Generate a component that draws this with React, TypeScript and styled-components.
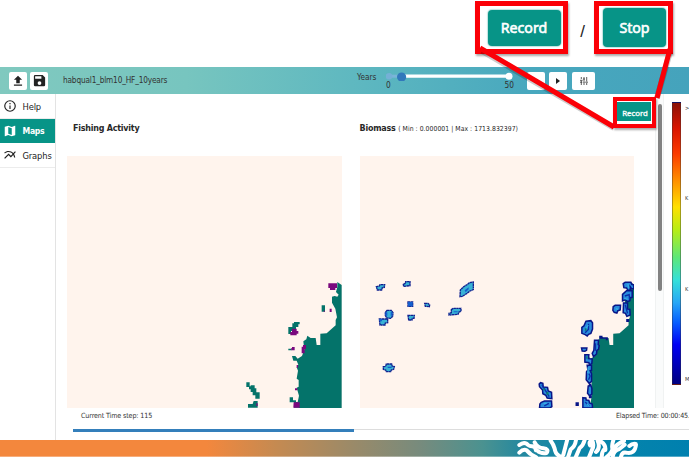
import React from "react";
import styled, { createGlobalStyle, css } from "styled-components";

const GlobalStyle = createGlobalStyle`
  * { box-sizing: border-box; }
  body {
    margin: 0;
    background: #fff;
    overflow: hidden;
    color: #333;
    font-family: "DejaVu Sans Condensed", "DejaVu Sans", "Noto Sans", sans-serif;
    font-stretch: condensed;
  }
`;

const Page = styled.main`
  position: relative;
  display: flex;
  flex-direction: column;
  width: 689px;
  height: 460px;
  overflow: hidden;
  background: #fff;
`;

const Callouts = styled.header`
  display: flex;
  align-items: flex-start;
  height: 67px;
  padding: 1px 0 0 475px;
`;

const CalloutBox = styled.div<{ $width: number }>`
  display: flex;
  width: ${(p) => p.$width}px;
  height: 53px;
  align-items: center;
  justify-content: center;
  border: 5px solid #fb0007;
  box-shadow: 1px 2px 2px #0005;
`;

const BigButton = styled.button<{ $width: number; $height: number; $offset: number }>`
  width: ${(p) => p.$width}px;
  height: ${(p) => p.$height}px;
  margin: 0 0 0 ${(p) => p.$offset}px;
  padding: 0 0 1px;
  border: 0;
  border-radius: 4px;
  background: #079487;
  box-shadow: 0 0 1px 1px #07948744;
  color: #fff;
  font: 14.2px "Noto Sans", sans-serif;
  -webkit-text-stroke: 0.6px #fff;
`;

const Slash = styled.span`
  width: 26px;
  padding: 21px 0 0 3px;
  text-align: center;
  color: #222;
  font: 17px "Liberation Sans", sans-serif;
`;

const AppBar = styled.nav`
  display: flex;
  align-items: center;
  height: 27px;
  padding-left: 9px;
  background: linear-gradient(90deg, #80c9bf 0%, #77c5bf 27%, #5db7c0 53%, #48a8be 77%, #45a3bc 100%);
`;

const ToolButton = styled.button<{ $width?: number; $gap?: number }>`
  display: flex;
  align-items: center;
  justify-content: center;
  flex: none;
  width: ${(p) => p.$width ?? 18}px;
  height: 18px;
  margin: 0 ${(p) => p.$gap ?? 3}px 0 0;
  padding: 0;
  border: 0;
  border-radius: 2px;
  background: #fff;
`;

const ProjectName = styled.div`
  flex: none;
  width: 306px;
  padding: 0 0 2px 12px;
  font-size: 8.2px;
  letter-spacing: -0.16px;
  white-space: nowrap;
`;

const YearsLabel = styled.label`
  flex: none;
  width: 29px;
  height: 19px;
  font-size: 8.2px;
  line-height: 12px;
`;

const YearSlider = styled.div`
  flex: none;
  width: 132px;
  height: 25px;
  margin-right: 9px;
`;

const Ends = styled.div`
  display: flex;
  justify-content: space-between;
  width: 128px;
  height: 10px;
  margin-top: -1px;
  font-size: 8.3px;
  line-height: 10px;
`;

const SliderArt = styled.svg`
  display: block;
  width: 130px;
  height: 13px;
`;

const Body = styled.div`
  display: flex;
  height: 346px;
`;

const Sidebar = styled.aside`
  flex: none;
  width: 56px;
  border-right: 1px solid #e3e3e3;
`;

const NavItem = styled.a<{ $active?: boolean }>`
  display: flex;
  align-items: center;
  height: 24.6px;
  padding: 1px 0 0 3px;
  gap: 5.5px;
  border-bottom: 1px solid #ececec;
  font-size: 9.3px;
  letter-spacing: -0.15px;
  color: #222;
  ${(p) =>
    p.$active &&
    css`
      background: #079487;
      border-color: #079487;
      color: #fff;
      font-weight: bold;
      font-size: 8.6px;
      letter-spacing: -0.3px;
    `}
`;

const NavIcon = styled.svg`
  flex: none;
  width: 14px;
  height: 14px;
`;

const Workspace = styled.section`
  width: 616px;
  flex: none;
  padding: 0 0 0 11px;
`;

const MapArea = styled.div`
  display: flex;
  gap: 18px;
  height: 314px;
`;

const MapPanel = styled.article`
  width: 274.6px;
  flex: none;
`;

const MapTitle = styled.h2<{ $indent: number }>`
  height: 62px;
  margin: 0;
  padding: 28px 0 0 ${(p) => p.$indent}px;
  font-size: 8.9px;
  letter-spacing: -0.22px;
  line-height: 13px;
  white-space: nowrap;
  color: #282828;
`;

const Range = styled.span`
  font-size: 6.8px;
  font-weight: normal;
  letter-spacing: 0.05px;
`;

const MapCanvas = styled.svg`
  display: block;
  width: 274.6px;
  height: 252px;
  background: #fff4ed;
`;

const ScrollTrack = styled.div`
  flex: none;
  width: 9px;
  height: 314px;
  margin-left: 3px;
  padding: 10px 1px 0 1.5px;
  border: 1px solid #f0f2f2;
  border-width: 0 1px;
  background: #fafbfb;
`;

const ScrollThumb = styled.div`
  width: 4.5px;
  height: 187px;
  border-radius: 2px;
  background: #828282;
`;

const Status = styled.div`
  display: flex;
  justify-content: space-between;
  width: 622px;
  height: 21px;
  padding: 2px 0 0 14px;
  font-size: 7.1px;
  letter-spacing: -0.12px;
  line-height: 11px;
  white-space: nowrap;
`;

const Elapsed = styled.span`
  width: 73px;
  flex: none;
  letter-spacing: -0.16px;
`;

const Progress = styled.div`
  width: 616px;
  height: 3px;
  margin-left: 6px;
  border-top: 1px solid #ddd;
`;

const ProgressFill = styled.div`
  width: 281px;
  height: 3px;
  margin-top: -1px;
  background: #347fbb;
`;

const Legend = styled.div`
  display: flex;
  flex: none;
  width: 17px;
  padding-top: 8px;
  gap: 4px;
`;

const ColorBar = styled.div`
  flex: none;
  width: 9px;
  height: 283px;
  border: 1px solid #3336;
  background: linear-gradient(#8b1208 0%, #d91500 9%, #fb3b00 18%, #ff9300 28%, #ffe000 37%, #b8ed14 45%, #5de779 55%, #35e0d9 63%, #27a7f6 71%, #075fff 78%, #0000f4 86%, #000080 100%);
`;

const LegendLabels = styled.div`
  display: flex;
  flex-direction: column;
  justify-content: space-between;
  height: 282px;
  padding: 1px 0 0;
  font-size: 5.6px;
  line-height: 10px;
`;

const Footer = styled.footer`
  height: 17px;
  background: linear-gradient(90deg, #f3873d 0 30%, #c58a51 40%, #9b8a68 51%, #778b7d 61%, #4b9290 70%, #2388a0 76%, #0785aa 86%, #0080af 100%);
`;

const Coral = styled.svg`
  display: block;
  width: 689px;
  height: 17px;
`;

const CalloutOverlay = styled.svg`
  position: absolute;
  inset: 0;
  pointer-events: none;
`;

const RecordBadge = styled.div`
  position: absolute;
  left: 613px;
  top: 97px;
  width: 43px;
  height: 31px;
  padding: 1px 1px 2px 0;
  border: 4px solid #fb0007;
  background: #fff;
  box-shadow: 1px 2px 2px #0005;
`;

const RecordButton = styled.button`
  display: block;
  width: 34px;
  height: 19px;
  padding: 2px 0 0 2px;
  border: 0;
  background: #079487;
  color: #fff;
  font: 7.8px "Noto Sans", sans-serif;
  -webkit-text-stroke: 0.3px #fff;
`;

const LAND =
  "322,36 335,45 335,414 207,414 203,397 207,377 200,353 206,350 206,330 200,326 204,302 200,292 205,284 200,272 190,272 186,258 196,258 203,266 216,258 223,239 220,214 229,208 232,197 242,204 257,204 260,225 271,225 271,191 290,190 317,166 317,150 321,142 316,116 306,98 306,80 314,78 322,80 326,74 318,66 322,51";

function ActivityMap() {
  return (
    <MapCanvas viewBox="0 0 274.6 252">
      <g transform="translate(163 114) scale(.33333)" fill="#04736a">
        <polygon points={LAND} />
        <path d="M275 106h10v19h-10zM192 156h17v7h-4v8h-7v12h-15v9h-8v-21h12v-11h5zM175 236h10v5h-10zM49 337h10v14H49zM62 346h12v9h5v12h10v19H76v-10h-8v-10h-6v-8h-5v-9h5zM71 393h12v20H54v-11h14zM179 382h10v9h9v5h9v17h-15v-16h-13z" />
        <path fill="#7a087e" d="M295 40h26v14h-5v6h-16v-6h-5zM299 116h6v10h-6zM186 176h14v7h5v8h-5v5h-19v-10h5zM186 231h8v10h-10v-7h2zM219 225h9v12h-4v13h-9v-20h4zM191 397h18v16h-19zM200 285h4v8h-4zM195 355h7v6h-7zM79 400h4v8h-4zM281 122h4v3h-4z" />
      </g>
    </MapCanvas>
  );
}

const ISLANDS = [
  "49,50 58,48 60,44 74,44 73,52 67,53 65,60 52,60",
  "130,43 136,40 137,35 150,35 150,47 131,49",
  "144,96 158,96 158,109 144,109",
  "194,100 204,100 209,105 208,110 196,109",
  "144,136 163,136 162,145 157,145 156,150 146,150",
  "81,121 94,121 99,128 98,139 92,145 80,144 76,136 76,127",
  "58,147 83,147 83,158 76,159 75,165 60,165",
  "274,119 280,115 303,115 303,124 297,126 294,133 267,135 267,130 274,128",
  "300,80 301,60 311,50 323,43 328,38 340,36 340,59 330,63 321,70 307,79",
  "70,290 77,289 79,282 95,282 97,289 103,290 101,298 94,300 92,305 79,305 77,300 70,298",
];

const COAST = [
  "279,41 285,37 302,37 305,43 311,45 311,56 304,56 300,50 300,61 293,61 289,54 281,53",
  "277,73 289,62 306,62 306,82 300,83 299,92 291,95 287,89 277,93",
  "249,110 255,106 271,106 270,120 263,122 260,129 252,127 248,121",
  "280,99 292,99 292,117 299,118 300,135 290,139 286,130 279,128",
  "167,154 182,152 187,158 187,177 182,190 175,193 171,198 165,194 155,190 155,172 161,168",
  "154,234 170,234 169,241 164,244 156,243",
  "193,211 205,211 204,224 207,226 205,238 200,241 199,252 190,260 186,250 191,241",
  "164,254 176,254 175,266 186,267 185,280 178,285 176,278 164,276",
  "171,286 184,286 184,301 180,302 184,311 184,334 177,340 168,329 169,305 173,300",
  "174,348 182,346 185,355 185,372 178,377 172,370",
  "158,383 167,384 168,390 176,391 178,399 186,402 187,414 158,414",
  "27,342 31,338 38,340 39,351 52,352 54,363 64,367 65,386 51,384 47,376 38,371 37,360 28,350",
  "33,397 43,393 64,393 65,410 59,414 28,414 29,402",
];

function BiomassMap() {
  return (
    <MapCanvas viewBox="0 0 274.6 252">
      <polygon points={LAND} fill="#04736a" transform="translate(162.9 114) scale(.33333)" />
      <g transform="translate(0 114) scale(.33333)" fill="#39b2d5" stroke="#10218f" strokeWidth="4" strokeDasharray="7 1">
        {ISLANDS.map((points) => (
          <polygon key={points} points={points} />
        ))}
        <g fill="#145fce" stroke="none">
          <path d="M144 96h14v13h-14zM76 127h6v10h-6zM92 126h5v11h-5zM281 124h12v3h-12zM314 61l12-9v6l-9 9zM83 290h12v4H83zM58 147h8v7h-8z" />
        </g>
      </g>
      <g transform="translate(170.2 114) scale(.33333)" fill="#298bdc" stroke="#081587" strokeWidth="4.5">
        {COAST.map((points) => (
          <polygon key={points} points={points} />
        ))}
        <path fill="#081587" stroke="none" d="M288 147h9v9h-9zM207 197h10v5h16v9h-6v-5h-20zM136 397h10v11h-10zM176 341h7v8h-7zM176 376h9v9h-9z" />
        <g fill="none" stroke="#0b2da8" strokeWidth="4">
          <path d="M284 78l13-4 1 15M175 161v17l-10 10M176 311l4 7-5 11M165 396l12 12M35 344l11 18 11 18M42 408l14-8M285 104l7 26M196 220v22" />
        </g>
        <path fill="none" stroke="#36afe5" strokeWidth="4" d="M293 42l3 13M282 85l10 3M165 180l9-15M174 292l-1 18M171 401l5 8M40 400h9M257 116l7 2" />
        <path fill="#09806f" stroke="none" d="M164 175h5v7h-5zM39 355h5v6h-5zM49 366h6v8h-6zM168 259h4v7h-4z" />
      </g>
    </MapCanvas>
  );
}

export default function App() {
  return (
    <>
      <GlobalStyle />
      <Page>
        <Callouts>
          <CalloutBox $width={93}>
            <BigButton $width={73} $height={36} $offset={5}>Record</BigButton>
          </CalloutBox>
          <Slash>/</Slash>
          <CalloutBox $width={79}>
            <BigButton $width={63} $height={39} $offset={2}>Stop</BigButton>
          </CalloutBox>
        </Callouts>
        <AppBar>
          <ToolButton>
            <svg width="14" height="14" viewBox="0 0 24 24" fill="#222"><path d="M5 20h14v-2H5v2zm0-10h4v6h6v-6h4l-7-7-7 7z" /></svg>
          </ToolButton>
          <ToolButton>
            <svg width="15" height="15" viewBox="0 0 24 24" fill="#222"><path d="M17 3H5a2 2 0 0 0-2 2v14a2 2 0 0 0 2 2h14a2 2 0 0 0 2-2V7l-4-4zm-5 16a3 3 0 1 1 0-6 3 3 0 0 1 0 6zm3-10H5V5h10v4z" /></svg>
          </ToolButton>
          <ProjectName>habqual1_blm10_HF_10years</ProjectName>
          <YearsLabel>Years</YearsLabel>
          <YearSlider>
            <SliderArt viewBox="0 0 130 13">
              <path d="M3 8.2h13" stroke="#79b5d8" strokeWidth="3" />
              <path d="M16 8.2h107" stroke="#fff" strokeWidth="3.2" />
              <circle cx="3" cy="8.2" r="3.3" fill="#75b0d6" />
              <circle cx="123" cy="8.2" r="3.5" fill="#fff" />
              <circle cx="15.6" cy="9" r="4.6" fill="#3178bb" />
            </SliderArt>
            <Ends><span>0</span><span>50</span></Ends>
          </YearSlider>
          <ToolButton $gap={4}>
            <svg width="8" height="8"><path d="M2 2h4v4H2z" fill="#222" /></svg>
          </ToolButton>
          <ToolButton $gap={5}>
            <svg width="6" height="6"><path d="M1 0l4 3-4 3z" fill="#222" /></svg>
          </ToolButton>
          <ToolButton $width={23}>
            <svg width="8" height="8" viewBox="0 0 8 8" stroke="#333" strokeWidth=".8"><path d="M1.3 0v2M1.3 3.5V8M4 0v4.5M4 6v2M6.7 0v4.5M6.7 6v2M0 3.3h2.6M2.7 5.2h2.6M5.4 5.2H8M3 2h2M0 5.2h2" /></svg>
          </ToolButton>
        </AppBar>
        <Body>
          <Sidebar>
            <NavItem>
              <NavIcon viewBox="0 0 24 24" fill="none" stroke="#222" strokeWidth="2"><circle cx="12" cy="12" r="9" /><path d="M12 11v6M12 7v2" /></NavIcon>
              Help
            </NavItem>
            <NavItem $active>
              <NavIcon viewBox="0 0 24 24" fill="#fff"><path d="M20.5 3l-.16.03L15 5.1 9 3 3.36 4.9c-.21.07-.36.25-.36.48V20.5c0 .28.22.5.5.5l.16-.03L9 18.9l6 2.1 5.64-1.9c.21-.07.36-.25.36-.48V3.5c0-.28-.22-.5-.5-.5zM15 19l-6-2.11V5l6 2.11V19z" /></NavIcon>
              Maps
            </NavItem>
            <NavItem>
              <NavIcon viewBox="0 0 24 24" fill="#222"><path d="M22 6.92l-1.41-1.41-2.85 3.21C15.68 6.4 12.83 5 9.61 5 6.72 5 4.07 6.16 2 8l1.42 1.42C5.12 7.93 7.27 7 9.61 7c2.74 0 5.09 1.26 6.77 3.24l-2.88 3.24-4-4L2 16.99l1.5 1.5 6-6.01 4 4 4.05-4.55c.75 1.35 1.25 2.9 1.44 4.55H21c-.22-2.3-.95-4.39-2.04-6.14L22 6.92z" /></NavIcon>
              Graphs
            </NavItem>
          </Sidebar>
          <Workspace>
            <MapArea>
              <MapPanel>
                <MapTitle $indent={6}>Fishing Activity</MapTitle>
                <ActivityMap />
              </MapPanel>
              <MapPanel>
                <MapTitle $indent={0}>Biomass <Range>( Min : 0.000001 | Max : 1713.832397)</Range></MapTitle>
                <BiomassMap />
              </MapPanel>
              <ScrollTrack><ScrollThumb /></ScrollTrack>
            </MapArea>
            <Status>
              <span>Current Time step: 115</span>
              <Elapsed>Elapsed Time: 00:00:45.</Elapsed>
            </Status>
            <Progress><ProgressFill /></Progress>
          </Workspace>
          <Legend>
            <ColorBar />
            <LegendLabels><span>&gt;</span><span>K</span><span>K</span><span>M</span></LegendLabels>
          </Legend>
        </Body>
        <Footer>
          <Coral viewBox="0 0 689 17">
            <g transform="translate(512 -4) scale(.33333)" fill="none" stroke="#fff" strokeWidth="12" strokeLinecap="round" strokeLinejoin="round">
              <path d="M22 27q12-10 22-4 6 8 16 8t12 12M22 50q12-12 22-7 12 14 28 20M68 19q8 16 26 18t10 14q-18 3-28-7M116 14q8 10 12 24 2 18 22 26M166 10l-12 46M192 12q-3 20-16 28l-8 24M218 12q-4 16-15 24l-12 28M234 28q-5-12 7-14 6 13 0 25l-10 25M252 48q14-12 5-34M266 16q16 10 14 26M269 64q0-16 8-25M304 13q-5 14-3 24t-18 27M336 14q-18 8-31 22M302 64q2-21 20-25l16-13M327 62q3-14 15-12 27 6 30-24M352 30q9-8 19-6" />
            </g>
            <path d="M0 16.7h689" stroke="#fff6" />
          </Coral>
        </Footer>
        <CalloutOverlay width="689" height="460" viewBox="0 0 689 460">
          <g fill="none" stroke="#0003" strokeWidth="6"><path d="M482 51l132 77M670 52l-13 46" /></g>
          <g fill="none" stroke="#fb0007" strokeWidth="5"><path d="M480 48l134 79M670 49l-13 49" /></g>
        </CalloutOverlay>
        <RecordBadge><RecordButton>Record</RecordButton></RecordBadge>
      </Page>
    </>
  );
}
